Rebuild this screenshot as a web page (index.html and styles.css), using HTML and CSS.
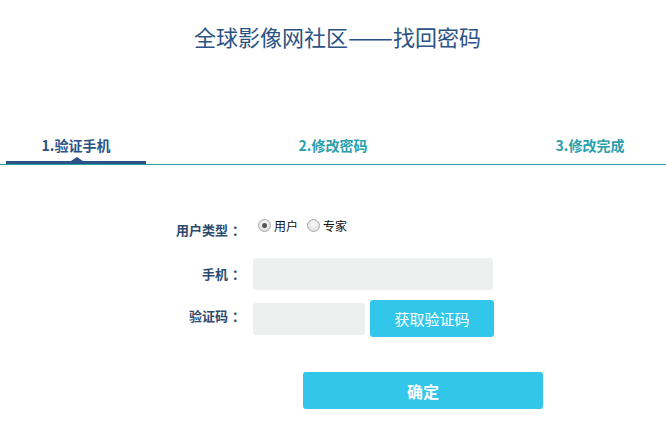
FILE: index.html
```html
<!DOCTYPE html>
<html lang="zh-CN">
<head>
<meta charset="utf-8">
<title>全球影像网社区——找回密码</title>
<link rel="stylesheet" href="styles.css">
</head>
<body>
<div class="page">
  <h1 class="title">全球影像网社区<span class="dash">——</span>找回密码</h1>
  <nav class="steps">
    <div class="step step-active">1.验证手机</div>
    <div class="step">2.修改密码</div>
    <div class="step">3.修改完成</div>
  </nav>
  <form class="form">
    <div class="row row-type">
      <div class="label label-type">用户类型<span class="colon">：</span></div>
      <div class="radios">
        <label class="radio"><input type="radio" name="t" class="radio-input" checked><span>用户</span></label>
        <label class="radio"><input type="radio" name="t" class="radio-input"><span>专家</span></label>
      </div>
    </div>
    <div class="row row-phone">
      <div class="label">手机<span class="colon">：</span></div>
      <input class="input input-wide" type="text">
    </div>
    <div class="row row-code">
      <div class="label label-code">验证码<span class="colon">：</span></div>
      <input class="input input-short" type="text">
      <button type="button" class="btn btn-code">获取验证码</button>
    </div>
    <div class="row row-submit">
      <button type="button" class="btn btn-submit">确定</button>
    </div>
  </form>
</div>
</body>
</html>
```
FILE: styles.css
```css
* { box-sizing: border-box; }
html, body { margin: 0; padding: 0; background: #fff; }
body {
  font-family: "Noto Sans CJK SC", "Microsoft YaHei", sans-serif;
  color: #333;
}
.page { width: 666px; }
.title {
  margin: 0;
  padding-top: 21px;
  padding-left: 9px;
  font-size: 22px;
  line-height: 30px;
  font-weight: normal;
  color: #2b5385;
  text-align: center;
}
.dash {
  display: inline-block;
  transform: scaleX(1.22);
  margin: 0 4px;
}
.steps {
  margin-top: 84px;
  display: flex;
  justify-content: space-between;
  padding: 0 6px;
  border-bottom: 1px solid #25a2a6;
}
.step {
  width: 140px;
  height: 29px;
  line-height: 20px;
  padding-bottom: 9px;
  text-align: center;
  font-size: 14px;
  font-weight: bold;
  color: #2aa0ab;
  position: relative;
}
.step-active {
  color: #2b5385;
  border-bottom: 3px solid #2b5385;
  padding-bottom: 6px;
}
.step-active::after {
  content: "";
  position: absolute;
  left: 65px;
  bottom: 0;
  border-left: 6px solid transparent;
  border-right: 6px solid transparent;
  border-bottom: 4px solid #2b5385;
}
.form {
  margin-top: 52px;
  display: flex;
  flex-direction: column;
}
.row {
  display: flex;
  align-items: center;
}
.row-type { height: 20px; }
.row-phone { margin-top: 21px; }
.row-code { margin-top: 10px; }
.row-submit { margin-top: 35px; padding-left: 303px; }
.label {
  width: 241px;
  margin-right: 12px;
  text-align: right;
  font-size: 13px;
  font-weight: bold;
  color: #2d4a6e;
  line-height: 20px;
}
.colon {
  position: relative;
  left: 4px;
}
.label-type { position: relative; top: 3px; }
.label-code { position: relative; top: -3px; }
.radios {
  display: flex;
  align-items: center;
  gap: 9px;
  margin-left: 5px;
  position: relative;
  top: -2px;
}
.radio {
  display: flex;
  align-items: center;
  gap: 3px;
  font-size: 12px;
  color: #111;
}
.radio-input {
  -webkit-appearance: none;
  appearance: none;
  margin: 0;
  width: 13px;
  height: 13px;
  border-radius: 50%;
  border: 1px solid #a8a8a8;
  background: radial-gradient(circle at 50% 35%, #fafafa 0%, #d8d8d8 100%);
  position: relative;
}
.radio-input:checked::after {
  content: "";
  position: absolute;
  left: 3px;
  top: 3px;
  width: 5px;
  height: 5px;
  border-radius: 50%;
  background: #555;
}
.input {
  height: 32px;
  border: none;
  border-radius: 3px;
  background: #eef0ef;
  outline: none;
  padding: 0 8px;
}
.input-wide { width: 240px; }
.input-short { width: 112px; }
.btn {
  border: none;
  border-radius: 3px;
  background: #32c6ea;
  color: #fff;
  font-family: inherit;
  cursor: pointer;
}
.btn-code {
  margin-left: 5px;
  width: 124px;
  height: 37px;
  font-size: 15px;
}
.btn-submit {
  width: 240px;
  height: 37px;
  font-size: 16px;
  font-weight: bold;
}
```
